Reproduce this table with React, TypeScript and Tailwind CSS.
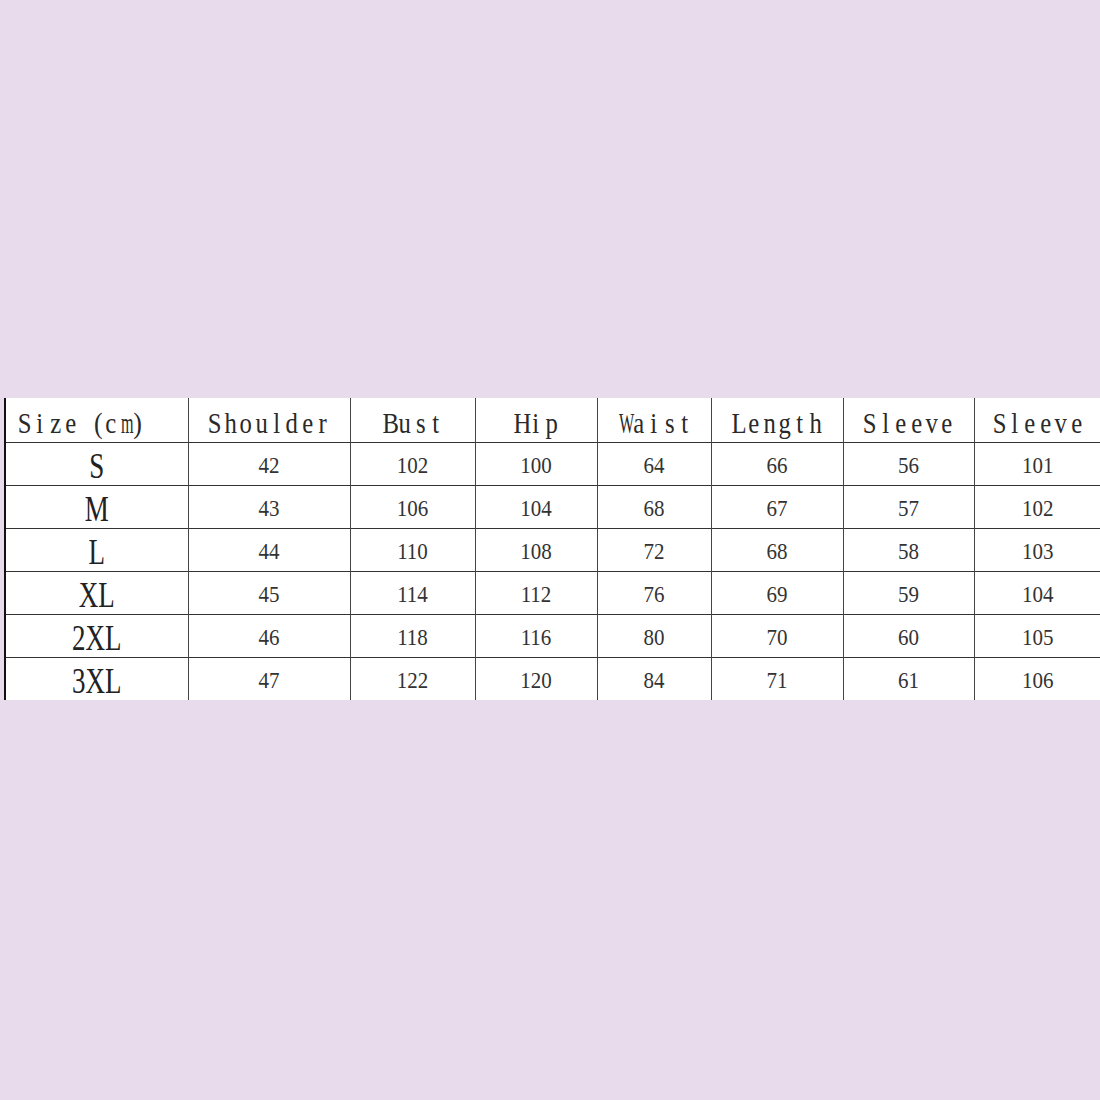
const headers = ['Shoulder', 'Bust', 'Hip', 'Waist', 'Length', 'Sleeve', 'Sleeve'];

const rows: [string, number[]][] = [
  ['S', [42, 102, 100, 64, 66, 56, 101]],
  ['M', [43, 106, 104, 68, 67, 57, 102]],
  ['L', [44, 110, 108, 72, 68, 58, 103]],
  ['XL', [45, 114, 112, 76, 69, 59, 104]],
  ['2XL', [46, 118, 116, 80, 70, 60, 105]],
  ['3XL', [47, 122, 120, 84, 71, 61, 106]],
];

const widths = [183, 162, 125, 122, 114, 132, 131, 127];

const serif = { fontFamily: '"Liberation Serif", "Noto Sans CJK SC", serif' };

// fixed-width serif look, one cell per letter
function MonoText({ text }: { text: string }) {
  return (
    <span className="inline-flex" style={serif}>
      {text.split('').map((c, i) => (
        <span
          key={i}
          className={
            c === 'W' || c === 'M' || c === 'm'
              ? 'inline-block w-[15.4px] text-center scale-x-[0.62] scale-y-[1.12]'
              : 'inline-block w-[15.4px] text-center scale-x-[0.95] scale-y-[1.12]'
          }
        >
          {c === ' ' ? '\u00a0' : c}
        </span>
      ))}
    </span>
  );
}

export default function App() {
  return (
    <div className="h-[1100px] w-[1100px] bg-[#e8dcec] pt-[398px] pl-[4px] overflow-hidden">
      <table className="table-fixed border-collapse bg-white w-[1096px]">
        <colgroup>
          {widths.map((w, i) => (
            <col key={i} style={{ width: w }} />
          ))}
        </colgroup>
        <thead>
          <tr className="h-[44px] border-b border-[#333]">
            <th className="border-l-2 border-l-[#111] text-left pl-[11px] pt-[6px] font-normal text-[26px] text-[#2a2a2a] leading-none">
              <span className="inline-flex items-baseline" style={serif}>
                <MonoText text="Size" />
                <span className="inline-block w-[24px] text-right scale-y-[1.12]">(</span>
                <MonoText text="cm" />
                <span className="inline-block w-[14px] text-left scale-y-[1.12]">)</span>
              </span>
            </th>
            {headers.map((h, i) => (
              <th
                key={i}
                className="border-l border-[#444] pt-[6px] font-normal text-[26px] text-[#2a2a2a] leading-none"
              >
                <MonoText text={h} />
              </th>
            ))}
          </tr>
        </thead>
        <tbody>
          {rows.map(([size, vals], r) => (
            <tr key={size} className={r < rows.length - 1 ? 'h-[43px] border-b border-[#333]' : 'h-[43px]'}>
              <td
                className="border-l-2 border-l-[#111] text-center pt-[5px] text-[27px] text-[#222] leading-none"
                style={serif}
              >
                <span className="inline-block scale-y-[1.3]">{size}</span>
              </td>
              {vals.map((v, i) => (
                <td
                  key={i}
                  className="border-l border-[#444] text-center pt-[4px] text-[21px] text-[#333] leading-none"
                  style={serif}
                >
                  <span className="inline-block scale-y-[1.1]">{v}</span>
                </td>
              ))}
            </tr>
          ))}
        </tbody>
      </table>
    </div>
  );
}
